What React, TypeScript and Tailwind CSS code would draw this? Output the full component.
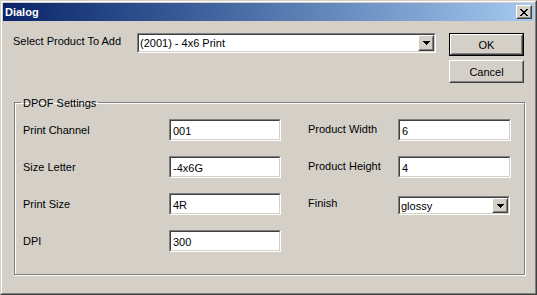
import type { ReactNode } from "react";

const font = { fontFamily: '"Liberation Sans", Arial, sans-serif' };

const xRows = ["xx....xx", ".xx..xx.", "..xxxx..", "...xx...", "..xxxx..", ".xx..xx.", "xx....xx"];

function CloseGlyph() {
	return (
		<svg width="8" height="7" viewBox="0 0 8 7" shapeRendering="crispEdges">
			{xRows.flatMap((row, y) =>
				row.split("").map((c, x) => (c === "x" ? <rect key={`${x}-${y}`} x={x} y={y} width="1" height="1" fill="#000" /> : null)),
			)}
		</svg>
	);
}

function Raised({ className = "", children }: { className?: string; children?: ReactNode }) {
	return (
		<div className={`border border-t-white border-l-white border-b-[#404040] border-r-[#404040] ${className}`}>
			<div className="flex h-full w-full items-center justify-center border border-t-[#d4d0c8] border-l-[#d4d0c8] border-b-[#808080] border-r-[#808080] bg-[#d4d0c8]">
				{children}
			</div>
		</div>
	);
}

function Sunken({ className = "", children }: { className?: string; children?: ReactNode }) {
	return (
		<div className={`border border-t-[#808080] border-l-[#808080] border-b-white border-r-white ${className}`}>
			<div className="flex h-full w-full items-center border border-t-[#404040] border-l-[#404040] border-b-[#d4d0c8] border-r-[#d4d0c8] bg-white">
				{children}
			</div>
		</div>
	);
}

function TextBox({ value, className = "" }: { value: string; className?: string }) {
	return (
		<Sunken className={`h-[22px] ${className}`}>
			<span className="pl-[2px] pt-[1px] text-[11px] leading-[14px] text-black">{value}</span>
		</Sunken>
	);
}

function Combo({ value, className = "" }: { value: string; className?: string }) {
	return (
		<Sunken className={className}>
			<span className="flex-1 pl-[1px] text-[11px] leading-[14px] text-black">{value}</span>
			<Raised className="h-full w-[16px]">
				<svg width="7" height="4" viewBox="0 0 7 4" shapeRendering="crispEdges">
					<path d="M0 0h7v1h-1v1h-1v1h-1v1h-1v-1h-1v-1h-1v-1h-1z" fill="#000" />
				</svg>
			</Raised>
		</Sunken>
	);
}

function Label({ children, className = "" }: { children: ReactNode; className?: string }) {
	return <span className={`text-[11px] leading-[14px] text-black ${className}`}>{children}</span>;
}

export default function App() {
	return (
		<div className="h-[295px] w-[537px] overflow-hidden bg-[#d4d0c8]" style={font}>
			<div className="h-full w-full border border-t-[#d4d0c8] border-l-[#d4d0c8] border-b-[#404040] border-r-[#404040]">
				<div className="h-full w-full border border-t-white border-l-white border-b-[#808080] border-r-[#808080] p-px">
					<div className="flex h-[18px] items-center justify-between bg-gradient-to-r from-[#0a246a] to-[#a6caf0] pl-[2px] pr-[2px]">
						<span className="text-[11px] font-bold leading-[14px] text-white">Dialog</span>
						<Raised className="h-[14px] w-[16px]">
							<CloseGlyph />
						</Raised>
					</div>

					<div className="pl-[10px] pt-[12px]">
						<div className="flex items-start">
							<Label className="mt-[1px] w-[124px]">Select Product To Add</Label>
							<Combo value="(2001) - 4x6 Print" className="h-[20px] w-[299px]" />
							<div className="ml-[13px] flex flex-col gap-[4px]">
								<div className="border border-black">
									<Raised className="h-[21px] w-[73px]">
										<Label>OK</Label>
									</Raised>
								</div>
								<Raised className="h-[23px] w-[75px]">
									<Label>Cancel</Label>
								</Raised>
							</div>
						</div>

						<fieldset className="ml-px mt-[7px] h-[185px] w-[511px] border border-[#808080] shadow-[inset_1px_1px_0_#fff,1px_1px_0_#fff]">
							<legend className="ml-[6px] px-[2px]">
								<Label>DPOF Settings</Label>
							</legend>
							<div className="grid grid-cols-[146px_112px_117px_113px] items-center gap-y-[15px] pl-[8px] pt-[5px]">
								<Label>Print Channel</Label>
								<TextBox value="001" />
								<Label className="pb-[3px] pl-[27px]">Product Width</Label>
								<TextBox value="6" />

								<Label>Size Letter</Label>
								<TextBox value="-4x6G" />
								<Label className="pb-[3px] pl-[27px]">Product Height</Label>
								<TextBox value="4" />

								<Label>Print Size</Label>
								<TextBox value="4R" />
								<Label className="pb-[3px] pl-[27px]">Finish</Label>
								<Combo value="glossy" className="mt-[3px] h-[19px] w-[112px]" />

								<Label>DPI</Label>
								<TextBox value="300" />
								<span />
								<span />
							</div>
						</fieldset>
					</div>
				</div>
			</div>
		</div>
	);
}
